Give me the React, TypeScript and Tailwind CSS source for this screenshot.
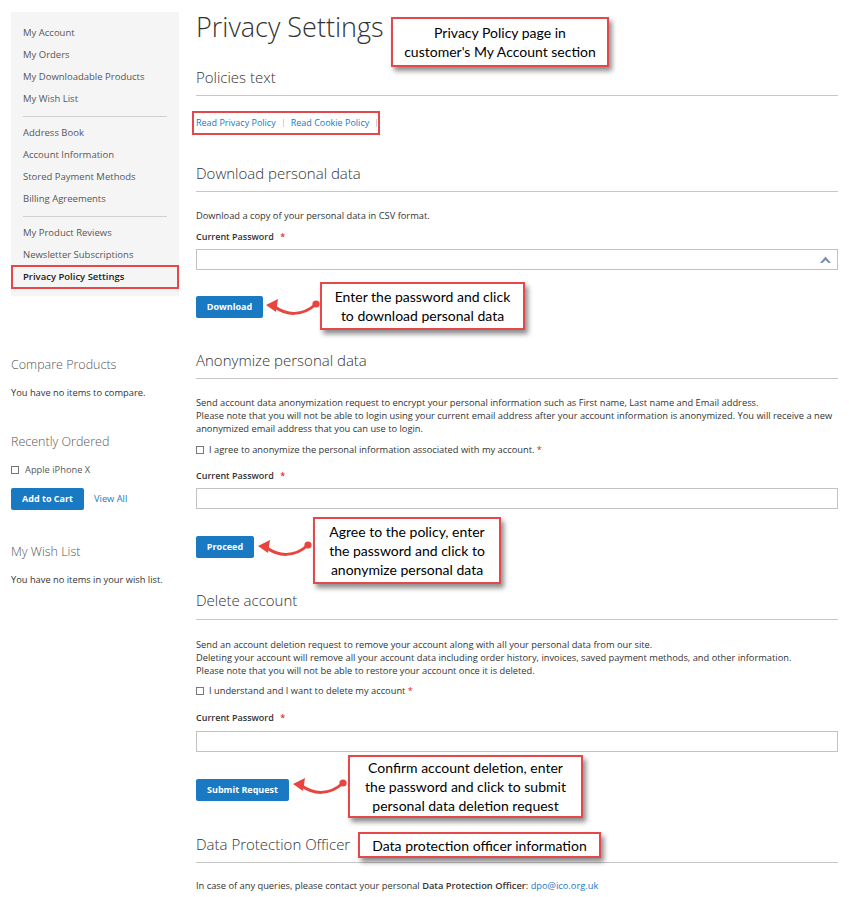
const navGroups = [
    ['My Account', 'My Orders', 'My Downloadable Products', 'My Wish List'],
    ['Address Book', 'Account Information', 'Stored Payment Methods', 'Billing Agreements'],
    ['My Product Reviews', 'Newsletter Subscriptions', 'Privacy Policy Settings'],
];

const Arrow = ({className}: {className: string}) => (
    <svg className={className} width="58" height="22" viewBox="0 0 58 22" fill="none">
        <path d="M11 12 C 22 20, 38 22, 52 9" stroke="#e8453f" strokeWidth="3" strokeLinecap="round" />
        <polygon points="2,10 14,4 12,17" fill="#e8453f" />
        <circle cx="52" cy="9" r="3.6" fill="#e8453f" />
    </svg>
);

const Note = ({className, lines}: {className: string; lines: string[]}) => (
    <div
        className={`absolute flex flex-col items-center justify-center border-[2.5px] border-[#e5484a] bg-white text-center font-['Lato',sans-serif] text-[14px] leading-[19px] text-black shadow-[3px_4px_5px_rgba(0,0,0,0.45)] ${className}`}
    >
        {lines.map((line) => (
            <span key={line}>{line}</span>
        ))}
    </div>
);

const SectionTitle = ({children, className}: {children: React.ReactNode; className: string}) => (
    <h2 className={`border-b border-[#c6c6c6] pb-[8px] text-[15px] font-light leading-[20px] text-[#333] ${className}`}>{children}</h2>
);

const Label = ({className}: {className: string}) => (
    <div className={`text-[9px] font-semibold leading-[13px] text-[#333] ${className}`}>
        Current Password <span className="ml-[4px] text-[#e02b27]">*</span>
    </div>
);

const Box = () => <span className="inline-block size-[8px] shrink-0 border border-[#777] bg-white" />;

const Button = ({children, className}: {children: React.ReactNode; className: string}) => (
    <button
        className={`block h-[22px] rounded-[2px] bg-[#1979c3] text-[9px] font-bold text-white ${className}`}
    >
        {children}
    </button>
);

const App = () => {
    return (
        <div className="relative h-[897px] w-[849px] overflow-hidden bg-white font-['Open_Sans',sans-serif]">
            <div className="flex gap-[17px] pl-[11px]">
                <aside className="w-[168px] shrink-0 pt-[12px]">
                    <nav className="bg-[#f5f5f5] pt-[10px] pb-[8px]">
                        {navGroups.map((group, gi) => (
                            <div key={gi}>
                                {gi > 0 && <div className="mx-[12px] mt-[6px] mb-[5px] border-t border-[#d1d1d1]" />}
                                <ul>
                                    {group.map((item) => {
                                        const active = item === 'Privacy Policy Settings';
                                        return (
                                            <li
                                                key={item}
                                                className={`relative px-[12px] text-[9.5px] leading-[22px] ${active ? 'font-semibold text-[#222]' : 'text-[#575757]'}`}
                                            >
                                                {item}
                                                {active && (
                                                    <span className="absolute -top-[1px] right-0 -bottom-[1px] left-0 border-[2.5px] border-[#e5484a]" />
                                                )}
                                            </li>
                                        );
                                    })}
                                </ul>
                            </div>
                        ))}
                    </nav>

                    <h3 className="mt-[60px] text-[12.5px] font-light leading-[18px] text-[#575757]">Compare Products</h3>
                    <p className="mt-[12px] text-[9.3px] leading-[13px] text-[#333]">You have no items to compare.</p>

                    <h3 className="mt-[34px] text-[12.5px] font-light leading-[18px] text-[#575757]">Recently Ordered</h3>
                    <div className="mt-[12px] flex items-center gap-[6px] text-[9.3px] leading-[13px] text-[#575757]">
                        <Box />
                        Apple iPhone X
                    </div>
                    <div className="mt-[12px] flex items-center gap-[10px]">
                        <Button className="w-[73px]">Add to Cart</Button>
                        <a className="text-[9.3px] text-[#1979c3]">View All</a>
                    </div>

                    <h3 className="mt-[33px] text-[12.5px] font-light leading-[18px] text-[#575757]">My Wish List</h3>
                    <p className="mt-[12px] text-[9.3px] leading-[13px] text-[#333]">You have no items in your wish list.</p>
                </aside>

                <main className="w-[642px] pt-[11px] text-[#333]">
                    <h1 className="text-[27px] font-light leading-[32px] text-[#333]">Privacy Settings</h1>

                    <SectionTitle className="mt-[24px]">Policies text</SectionTitle>
                    <div className="mt-[20px] flex items-center text-[9px] leading-[14px] text-[#1979c3]">
                        <a>Read Privacy Policy</a>
                        <span className="mx-[7px] h-[8px] border-l border-[#d1d1d1]" />
                        <a>Read Cookie Policy</a>
                        <span className="ml-[7px] h-[8px] border-l border-[#d1d1d1]" />
                    </div>

                    <SectionTitle className="mt-[33px] pb-[7px]">Download personal data</SectionTitle>
                    <p className="mt-[17px] text-[9.3px] leading-[13px]">Download a copy of your personal data in CSV format.</p>
                    <Label className="mt-[8px]" />
                    <div className="mt-[6px] flex h-[21px] items-center justify-end border border-[#c2c2c2] bg-white pr-[6px]">
                        <svg width="11" height="7" viewBox="0 0 11 7">
                            <path d="M0 7 L5.5 0.5 L11 7 L8.5 7 L5.5 4 L2.5 7 Z" fill="#7f8ea6" />
                        </svg>
                    </div>
                    <Button className="mt-[26px] w-[67px]">Download</Button>

                    <SectionTitle className="mt-[32px]">Anonymize personal data</SectionTitle>
                    <p className="mt-[17px] text-[9.3px] leading-[13px]">
                        Send account data anonymization request to encrypt your personal information such as First name, Last name and Email address.
                        <br />
                        Please note that you will not be able to login using your current email address after your account information is anonymized. You will receive a new anonymized email address that you can use to login.
                    </p>
                    <div className="mt-[8px] flex items-center gap-[5px] text-[9.3px] leading-[13px]">
                        <Box />
                        <span>
                            I agree to anonymize the personal information associated with my account. <span className="text-[#e02b27]">*</span>
                        </span>
                    </div>
                    <Label className="mt-[13px]" />
                    <div className="mt-[6px] h-[21px] border border-[#c2c2c2] bg-white" />
                    <Button className="mt-[27px] w-[58px]">Proceed</Button>

                    <SectionTitle className="mt-[32px] pb-[9px]">Delete account</SectionTitle>
                    <p className="mt-[18px] text-[9.3px] leading-[13px]">
                        Send an account deletion request to remove your account along with all your personal data from our site.
                        <br />
                        Deleting your account will remove all your account data including order history, invoices, saved payment methods, and other information.
                        <br />
                        Please note that you will not be able to restore your account once it is deleted.
                    </p>
                    <div className="mt-[7px] flex items-center gap-[5px] text-[9.3px] leading-[13px]">
                        <Box />
                        <span>
                            I understand and I want to delete my account <span className="text-[#e02b27]">*</span>
                        </span>
                    </div>
                    <Label className="mt-[14px]" />
                    <div className="mt-[7px] h-[21px] border border-[#c2c2c2] bg-white" />
                    <Button className="mt-[27px] w-[93px]">Submit Request</Button>

                    <SectionTitle className="mt-[33px]">Data Protection Officer</SectionTitle>
                    <p className="mt-[16px] text-[9.3px] leading-[13px]">
                        In case of any queries, please contact your personal <strong className="font-semibold">Data Protection Officer</strong>:{' '}
                        <a className="text-[#1979c3]">dpo@ico.org.uk</a>
                    </p>
                </main>
            </div>

            <div className="absolute top-[111px] left-[192px] h-[24px] w-[188px] border-[2.5px] border-[#e5484a]" />

            <Note className="top-[17px] left-[391px] h-[50px] w-[218px]" lines={['Privacy Policy page in', "customer's My Account section"]} />
            <Note className="top-[282px] left-[320px] h-[48px] w-[205px]" lines={['Enter the password and click', 'to download personal data']} />
            <Note
                className="top-[517px] left-[313px] h-[67px] w-[188px]"
                lines={['Agree to the policy, enter', 'the password and click to', 'anonymize personal data']}
            />
            <Note
                className="top-[755px] left-[348px] h-[63px] w-[235px]"
                lines={['Confirm account deletion, enter', 'the password and click to submit', 'personal data deletion request']}
            />
            <Note className="top-[832px] left-[358px] h-[26px] w-[243px]" lines={['Data protection officer information']} />

            <Arrow className="absolute top-[295px] left-[264px]" />
            <Arrow className="absolute top-[536px] left-[256px]" />
            <Arrow className="absolute top-[774px] left-[291px]" />
        </div>
    );
};

export default App;
